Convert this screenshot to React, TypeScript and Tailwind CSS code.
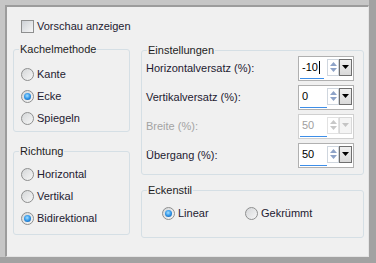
import type { ReactNode } from "react";

const Radio = ({ checked }: { checked?: boolean }) => (
  <span className="w-[13px] h-[13px] shrink-0 rounded-full border border-[#8e8f8f] bg-[linear-gradient(135deg,#d4d6d8,#f7f7f7)] flex items-center justify-center">
    {checked && (
      <span className="w-[7px] h-[7px] rounded-full bg-[radial-gradient(circle_at_45%_40%,#a6e0ff_0%,#2f95e8_50%,#0c4c96_100%)]" />
    )}
  </span>
);

const RadioItem = ({ label, checked }: { label: string; checked?: boolean }) => (
  <div className="h-[22px] flex items-center gap-[3px]">
    <Radio checked={checked} />
    <span>{label}</span>
  </div>
);

const Group = ({
  title,
  className,
  children,
}: {
  title: string;
  className: string;
  children: ReactNode;
}) => (
  <fieldset className={`border border-[#d5dfe5] rounded-[3px] ${className}`}>
    <legend className="ml-[5px] px-[1px] leading-[13px] text-[#1e1e1e]">{title}</legend>
    {children}
  </fieldset>
);

const Spin = ({
  value,
  bar,
  caret,
  disabled,
}: {
  value: string;
  bar: number;
  caret?: boolean;
  disabled?: boolean;
}) => (
  <div
    className={`w-[56px] h-[25px] border bg-white flex flex-col ${
      disabled ? "border-[#d0d0d0]" : "border-[#b0b0b0]"
    }`}
  >
    <div className="flex-1 flex pt-[2px] pr-[1px]">
      <div
        className={`flex-1 flex items-center pl-[3px] ${
          disabled ? "text-[#a0a0a0]" : "text-[#000]"
        }`}
      >
        {value}
        {caret && <span className="ml-[1px] w-[1px] h-[13px] bg-black" />}
      </div>
      <div
        className={`w-[12px] border flex flex-col items-center justify-around py-[1px] ${
          disabled ? "border-[#e2e2e2]" : "border-[#cfd6de]"
        }`}
      >
        <svg width="7" height="4" viewBox="0 0 7 4">
          <path d="M0 4 L3.5 0 L7 4 Z" fill={disabled ? "#c8c8c8" : "#8ea3c8"} />
        </svg>
        <svg width="7" height="4" viewBox="0 0 7 4">
          <path d="M0 0 L3.5 4 L7 0 Z" fill={disabled ? "#c8c8c8" : "#8ea3c8"} />
        </svg>
      </div>
      <div
        className={`w-[13px] border flex items-center justify-center ${
          disabled
            ? "border-[#d8d8d8] bg-[#f4f4f4]"
            : "border-[#6f6f6f] bg-[linear-gradient(#f0f0f0,#d9d9d9)]"
        }`}
      >
        <svg width="7" height="4" viewBox="0 0 7 4">
          <path d="M0 0 L3.5 4 L7 0 Z" fill={disabled ? "#c4c4c4" : "#000"} />
        </svg>
      </div>
    </div>
    <div className="h-[3px] mt-[2px] mb-[1px] ml-[1px]">
      <div className="h-full bg-[#3d8ee8]" style={{ width: bar }} />
    </div>
  </div>
);

const SpinRow = ({
  label,
  value,
  bar,
  caret,
  disabled,
}: {
  label: string;
  value: string;
  bar: number;
  caret?: boolean;
  disabled?: boolean;
}) => (
  <div className="h-[25px] flex items-center justify-between">
    <span className={disabled ? "text-[#a3a3a3]" : ""}>{label}</span>
    <Spin value={value} bar={bar} caret={caret} disabled={disabled} />
  </div>
);

export default function App() {
  return (
    <div className="w-[376px] h-[263px] bg-[#a2a2a2] font-['Liberation_Sans',Arial,sans-serif] text-[11px] text-[#1e2030]">
      <div className="w-[369px] h-[257px] bg-[#c6c6c6] pt-[5px] pl-[5px] flex">
        <div className="flex-1 flex flex-col border-t-2 border-l-2 border-[#9c9c9c] border-r border-b border-r-[#e4e4e4] border-b-[#e4e4e4] bg-[#f0f0f0] pl-[6px]">
          <div className="mt-[13px] ml-[8px] h-[13px] flex items-center gap-[3px]">
            <span className="w-[13px] h-[13px] border border-[#8e8f8f] bg-[linear-gradient(135deg,#cdd1d6,#f6f6f6)]" />
            <span>Vorschau anzeigen</span>
          </div>

          <div className="mt-[10px] flex gap-[11px]">
            <div className="w-[117px] flex flex-col gap-[13px]">
              <Group title="Kachelmethode" className="h-[89px]">
                <div className="pl-[7px] pt-[7px]">
                  <RadioItem label="Kante" />
                  <RadioItem label="Ecke" checked />
                  <RadioItem label="Spiegeln" />
                </div>
              </Group>
              <Group title="Richtung" className="h-[90px]">
                <div className="pl-[7px] pt-[5px]">
                  <RadioItem label="Horizontal" />
                  <RadioItem label="Vertikal" />
                  <RadioItem label="Bidirektional" checked />
                </div>
              </Group>
            </div>

            <div className="w-[223px] flex flex-col gap-[9px] pt-[1px]">
              <Group title="Einstellungen" className="h-[131px]">
                <div className="pl-[4px] pr-[9px] -mt-[1px] flex flex-col gap-[4px]">
                  <SpinRow label="Horizontalversatz (%):" value="-10" bar={24} caret />
                  <SpinRow label="Vertikalversatz (%):" value="0" bar={27} />
                  <SpinRow label="Breite (%):" value="50" bar={27} disabled />
                  <SpinRow label="Übergang (%):" value="50" bar={27} />
                </div>
              </Group>
              <Group title="Eckenstil" className="h-[54px]">
                <div className="pl-[20px] pt-[5px] flex">
                  <div className="w-[83px]">
                    <RadioItem label="Linear" checked />
                  </div>
                  <RadioItem label="Gekrümmt" />
                </div>
              </Group>
            </div>
          </div>
        </div>
      </div>
    </div>
  );
}
